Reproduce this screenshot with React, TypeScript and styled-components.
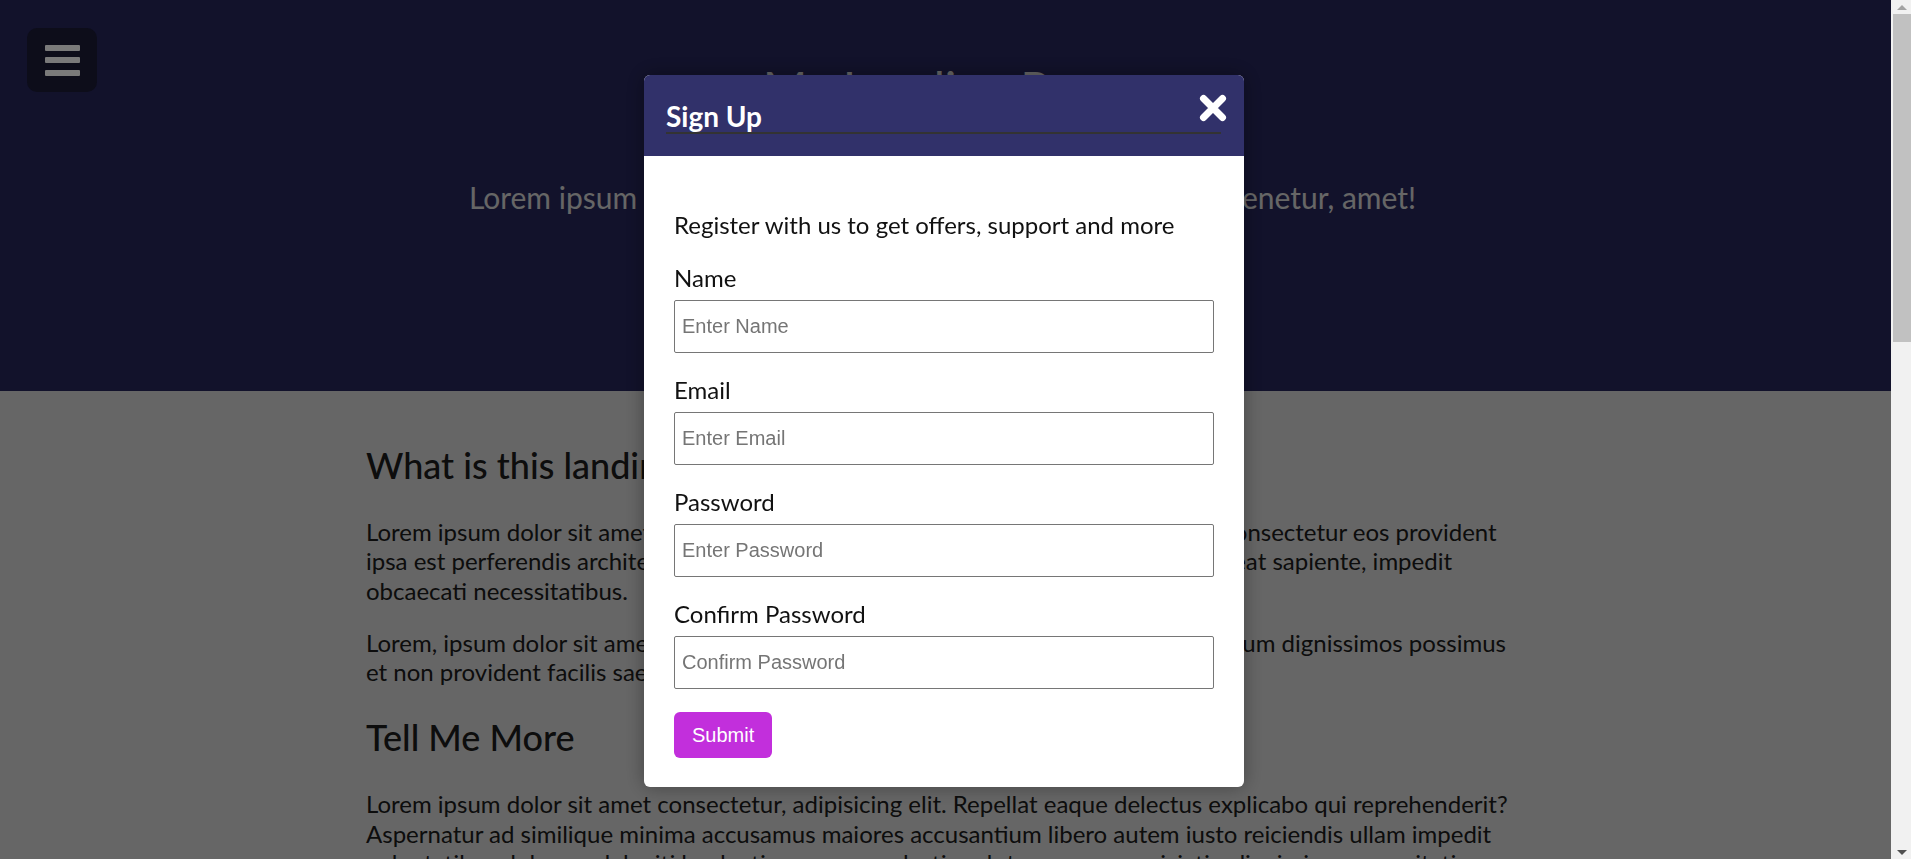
import React from 'react';
import styled, { createGlobalStyle } from 'styled-components';

// ----------
// Style
// ----------

const GlobalStyle = createGlobalStyle`
  html, body {
    margin: 0;
    padding: 0;
  }

  body {
    font-family: Lato, "Noto Sans", sans-serif;
    background: #fff;
    color: #222;
  }

  *, *::before, *::after {
    box-sizing: border-box;
  }
`;

const Page = styled.div`
  min-height: 2176px;
  padding-right: 20px;
`;

const Header = styled.header`
  height: 391px;
  padding: 60px 6px 0 0;
  background: #2d2d6b;
  color: #fff;
  text-align: center;
`;

const Title = styled.h1`
  margin: 0;
  font-size: 48px;
  font-weight: 400;
  line-height: 1.2;
`;

const Lead = styled.p`
  margin: 61px 0 0;
  font-size: 30px;
  line-height: 1.2;
`;

const CtaButton = styled.button`
  margin-top: 40px;
  padding: 12px 32px;
  border: none;
  border-radius: 6px;
  background: #c22fdc;
  color: #fff;
  font-family: "Liberation Sans", Arial, sans-serif;
  font-size: 20px;
`;

const MenuToggle = styled.button`
  position: fixed;
  top: 28px;
  left: 27px;
  z-index: 20;
  width: 70px;
  height: 64px;
  padding: 0;
  border: none;
  border-radius: 10px;
  background: #0d0d1a;
  display: flex;
  flex-direction: column;
  align-items: center;
  justify-content: center;
  gap: 6.5px;
`;

const Bar = styled.span`
  display: block;
  width: 35px;
  height: 6px;
  border-radius: 1px;
  background: #7a7a7a;
`;

const Content = styled.main`
  padding: 23px 9px 60px 0;
`;

const Container = styled.div`
  width: 1150px;
  margin: 0 auto;
`;

const SectionTitle = styled.h2`
  margin: 30px 0 31px;
  font-size: 36px;
  font-weight: 500;
  line-height: 42px;
  color: #222;
`;

const Paragraph = styled.p`
  margin: 0 0 23px;
  font-size: 24px;
  line-height: 29.25px;
`;

const Overlay = styled.div`
  position: fixed;
  top: 0;
  left: 0;
  bottom: 0;
  right: 20px;
  z-index: 10;
  padding: 3px 3px 0 0;
  background: rgba(0, 0, 0, 0.6);
  display: flex;
  align-items: center;
  justify-content: center;
`;

const Modal = styled.div`
  width: 600px;
  background: #fff;
  border-radius: 6px;
  overflow: hidden;
  box-shadow: 0 0 20px rgba(0, 0, 0, 0.35);
`;

const ModalHeader = styled.div`
  position: relative;
  padding: 25px 23px 22px 22px;
  background: #31316a;
  color: #fff;
`;

const ModalTitle = styled.h2`
  margin: 0;
  font-size: 28px;
  font-weight: 700;
  line-height: 32px;
  border-bottom: 2px solid #333;
`;

const CloseButton = styled.button`
  position: absolute;
  top: 19px;
  right: 17px;
  width: 28px;
  height: 28px;
  padding: 0;
  border: none;
  background: transparent;
  display: flex;
`;

const ModalBody = styled.div`
  padding: 30px 30px 29px;
`;

const Intro = styled.p`
  margin: 25px 0 26px;
  font-size: 24px;
  line-height: 27px;
  color: #111;
`;

const Field = styled.div`
  margin-bottom: 23px;
`;

const Label = styled.label`
  display: block;
  margin-bottom: 9px;
  font-size: 24px;
  line-height: 27px;
  color: #111;
`;

const Input = styled.input`
  display: block;
  width: 100%;
  height: 53px;
  padding: 0 7px;
  border: 1px solid #767676;
  border-radius: 2px;
  font-family: "Liberation Sans", Arial, sans-serif;
  font-size: 20px;
  color: #222;

  &::placeholder {
    color: #757575;
  }
`;

const SubmitButton = styled.button`
  height: 46px;
  padding: 0 18px;
  border: none;
  border-radius: 6px;
  background: #c22fdc;
  color: #fff;
  font-family: "Liberation Sans", Arial, sans-serif;
  font-size: 20px;
`;

// fake window scrollbar, the screenshot shows a classic one
const ScrollBar = styled.div`
  position: fixed;
  top: 0;
  right: 0;
  bottom: 0;
  z-index: 30;
  width: 20px;
  background: #f1f1f1;
  display: flex;
  flex-direction: column;
  align-items: flex-end;
`;

const ScrollArrow = styled.div<{ $down?: boolean }>`
  width: 18px;
  height: 14px;
  display: flex;
  align-items: center;
  justify-content: center;
  margin-top: ${(p) => (p.$down ? 'auto' : '0')};

  &::after {
    content: '';
    border-left: 5px solid transparent;
    border-right: 5px solid transparent;
    ${(p) => (p.$down ? 'border-top: 5px solid #505050;' : 'border-bottom: 5px solid #a3a3a3;')}
  }
`;

const ScrollThumb = styled.div`
  width: 18px;
  height: 328px;
  background: #c1c1c1;
`;

// ----------
// Data
// ----------

const fields = [
  { id: 'name', label: 'Name', type: 'text', placeholder: 'Enter Name' },
  { id: 'email', label: 'Email', type: 'email', placeholder: 'Enter Email' },
  { id: 'password', label: 'Password', type: 'password', placeholder: 'Enter Password' },
  { id: 'password2', label: 'Confirm Password', type: 'password', placeholder: 'Confirm Password' },
];

// ----------

const CloseIcon: React.FC = () => (
  <svg width="28" height="28" viewBox="0 0 28 28">
    <path d="M4.5 4.5 L23.5 23.5 M23.5 4.5 L4.5 23.5" stroke="#fff" strokeWidth="7" strokeLinecap="round" />
  </svg>
);

const App: React.FC = () => {
  return (
    <Page>
      <GlobalStyle />
      <MenuToggle aria-label="menu">
        <Bar />
        <Bar />
        <Bar />
      </MenuToggle>

      <Header>
        <Title>My Landing Page</Title>
        <Lead>Lorem ipsum dolor sit amet consectetur adipisicing elit. Et tenetur, amet!</Lead>
        <CtaButton>Sign Up</CtaButton>
      </Header>

      <Content>
        <Container>
          <SectionTitle>What is this landing page about?</SectionTitle>
          <Paragraph>
            Lorem ipsum dolor sit amet consectetur adipisicing elit. Nostrum eveniet, illum ea consectetur eos provident
            ipsa est perferendis architecto, voluptatum quibusdam nihil repellendus, fugiat placeat sapiente, impedit
            obcaecati necessitatibus.
          </Paragraph>
          <Paragraph>
            Lorem, ipsum dolor sit amet consectetur adipisicing elit. Natus laboriosam quasi, earum dignissimos possimus
            et non provident facilis saepe minus ratione quis.
          </Paragraph>
          <SectionTitle>Tell Me More</SectionTitle>
          <Paragraph>
            Lorem ipsum dolor sit amet consectetur, adipisicing elit. Repellat eaque delectus explicabo qui reprehenderit?
            Aspernatur ad similique minima accusamus maiores accusantium libero autem iusto reiciendis ullam impedit
            voluptatibus dolorum deleniti laudantium quam molestias ab tempore perspiciatis, dignissimos exercitationem sit.
            Fugit, nesciunt.
          </Paragraph>
          <Paragraph>
            Lorem ipsum dolor sit amet consectetur adipisicing elit. Quas, temporibus. Eius explicabo cumque nemo illum,
            dolorem facere officiis neque voluptate ratione, quod aliquid minima.
          </Paragraph>
        </Container>
      </Content>

      <Overlay>
        <Modal>
          <ModalHeader>
            <ModalTitle>Sign Up</ModalTitle>
            <CloseButton aria-label="close">
              <CloseIcon />
            </CloseButton>
          </ModalHeader>
          <ModalBody>
            <Intro>Register with us to get offers, support and more</Intro>
            <form onSubmit={(e) => e.preventDefault()}>
              {fields.map((field) => (
                <Field key={field.id}>
                  <Label htmlFor={field.id}>{field.label}</Label>
                  <Input id={field.id} type={field.type} placeholder={field.placeholder} />
                </Field>
              ))}
              <SubmitButton type="submit">Submit</SubmitButton>
            </form>
          </ModalBody>
        </Modal>
      </Overlay>

      <ScrollBar>
        <ScrollArrow />
        <ScrollThumb />
        <ScrollArrow $down />
      </ScrollBar>
    </Page>
  );
};

export default App;
